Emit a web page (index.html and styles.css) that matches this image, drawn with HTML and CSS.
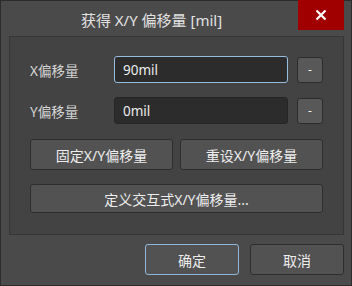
FILE: index.html
```html
<!DOCTYPE html>
<html lang="zh">
<head>
    <meta charset="UTF-8">
    <title>获得 X/Y 偏移量 [mil]</title>
    <link rel="stylesheet" href="styles.css">
</head>
<body>
    <div class="window">
        <div class="titlebar">
            <span class="title">获得 X/Y 偏移量 [mil]</span>
            <button class="close-btn">
                <svg width="12" height="12" viewBox="0 0 12 12">
                    <path d="M1.5 1.5 L10.5 10.5 M10.5 1.5 L1.5 10.5" stroke="#fff" stroke-width="2.2"/>
                </svg>
            </button>
        </div>

        <div class="panel">
            <div class="row">
                <label class="label">X偏移量</label>
                <input class="field focused" type="text" value="90mil">
                <button class="small-btn">-</button>
            </div>
            <div class="row">
                <label class="label">Y偏移量</label>
                <input class="field" type="text" value="0mil">
                <button class="small-btn">-</button>
            </div>
            <div class="btn-pair">
                <button class="btn">固定X/Y偏移量</button>
                <button class="btn">重设X/Y偏移量</button>
            </div>
            <button class="btn wide">定义交互式X/Y偏移量...</button>
        </div>

        <div class="footer">
            <button class="btn footer-btn default">确定</button>
            <button class="btn footer-btn">取消</button>
        </div>
    </div>
</body>
</html>
```

FILE: styles.css
```css
/* General */
html, body {
    margin: 0;
    padding: 0;
    background-color: #4a4a4a;
}

body {
    font-family: "Noto Sans", "Noto Sans CJK SC", sans-serif;
    color: #dcdcdc;
}

button, input {
    font-family: inherit;
}

.window {
    box-sizing: border-box;
    width: 352px;
    height: 286px;
    border: 1px solid #2c2c2c;
    background-color: #4a4a4a;
}

/* Title bar */
.titlebar {
    display: flex;
    height: 35px;
    margin-top: -1px;
}

.title {
    flex: 1;
    text-align: center;
    font-size: 15px;
    line-height: 40px;
    color: #e2e2e2;
    padding-left: 4px;
}

.close-btn {
    width: 46px;
    height: 30px;
    margin-right: 7px;
    border: none;
    padding: 0;
    background-color: #a10000;
    display: flex;
    align-items: center;
    justify-content: center;
}

/* Panel */
.panel {
    margin: 1px 7px 0 8px;
    height: 199px;
    box-sizing: border-box;
    border: 1px solid #363636;
    background-color: #434343;
    padding: 19px 20px 0 20px;
    display: flex;
    flex-direction: column;
}

.row {
    display: flex;
    align-items: center;
    height: 27px;
    margin-bottom: 14px;
}

.label {
    width: 84px;
    font-size: 13.5px;
    color: #d6d6d6;
}

.field {
    box-sizing: border-box;
    width: 174px;
    height: 27px;
    border: 1px solid #262626;
    border-radius: 3px;
    background-color: #2c2c2c;
    color: #ececec;
    font-size: 13.5px;
    padding: 0 8px;
    outline: none;
}

.field.focused {
    border-color: #97bde0;
}

.small-btn {
    box-sizing: border-box;
    width: 26px;
    height: 26px;
    margin-left: 9px;
    border: 1px solid #2c2c2c;
    border-radius: 3px;
    background-color: #585858;
    color: #f0f0f0;
    font-size: 12px;
    padding: 0;
}

/* Buttons */
.btn {
    box-sizing: border-box;
    border: 1px solid #2e2e2e;
    border-radius: 3px;
    background-color: #525252;
    color: #ededed;
    font-size: 14px;
    padding: 0;
}

.btn-pair {
    display: flex;
    gap: 7px;
    margin: 1px 0 14px 0;
}

.btn-pair .btn {
    width: 143px;
    height: 31px;
}

.wide {
    width: 293px;
    height: 29px;
}

/* Footer */
.footer {
    display: flex;
    justify-content: flex-end;
    gap: 11px;
    margin: 9px 7px 0 0;
}

.footer-btn {
    width: 94px;
    height: 31px;
}

.footer-btn.default {
    border-color: #8fb6dc;
}
```
